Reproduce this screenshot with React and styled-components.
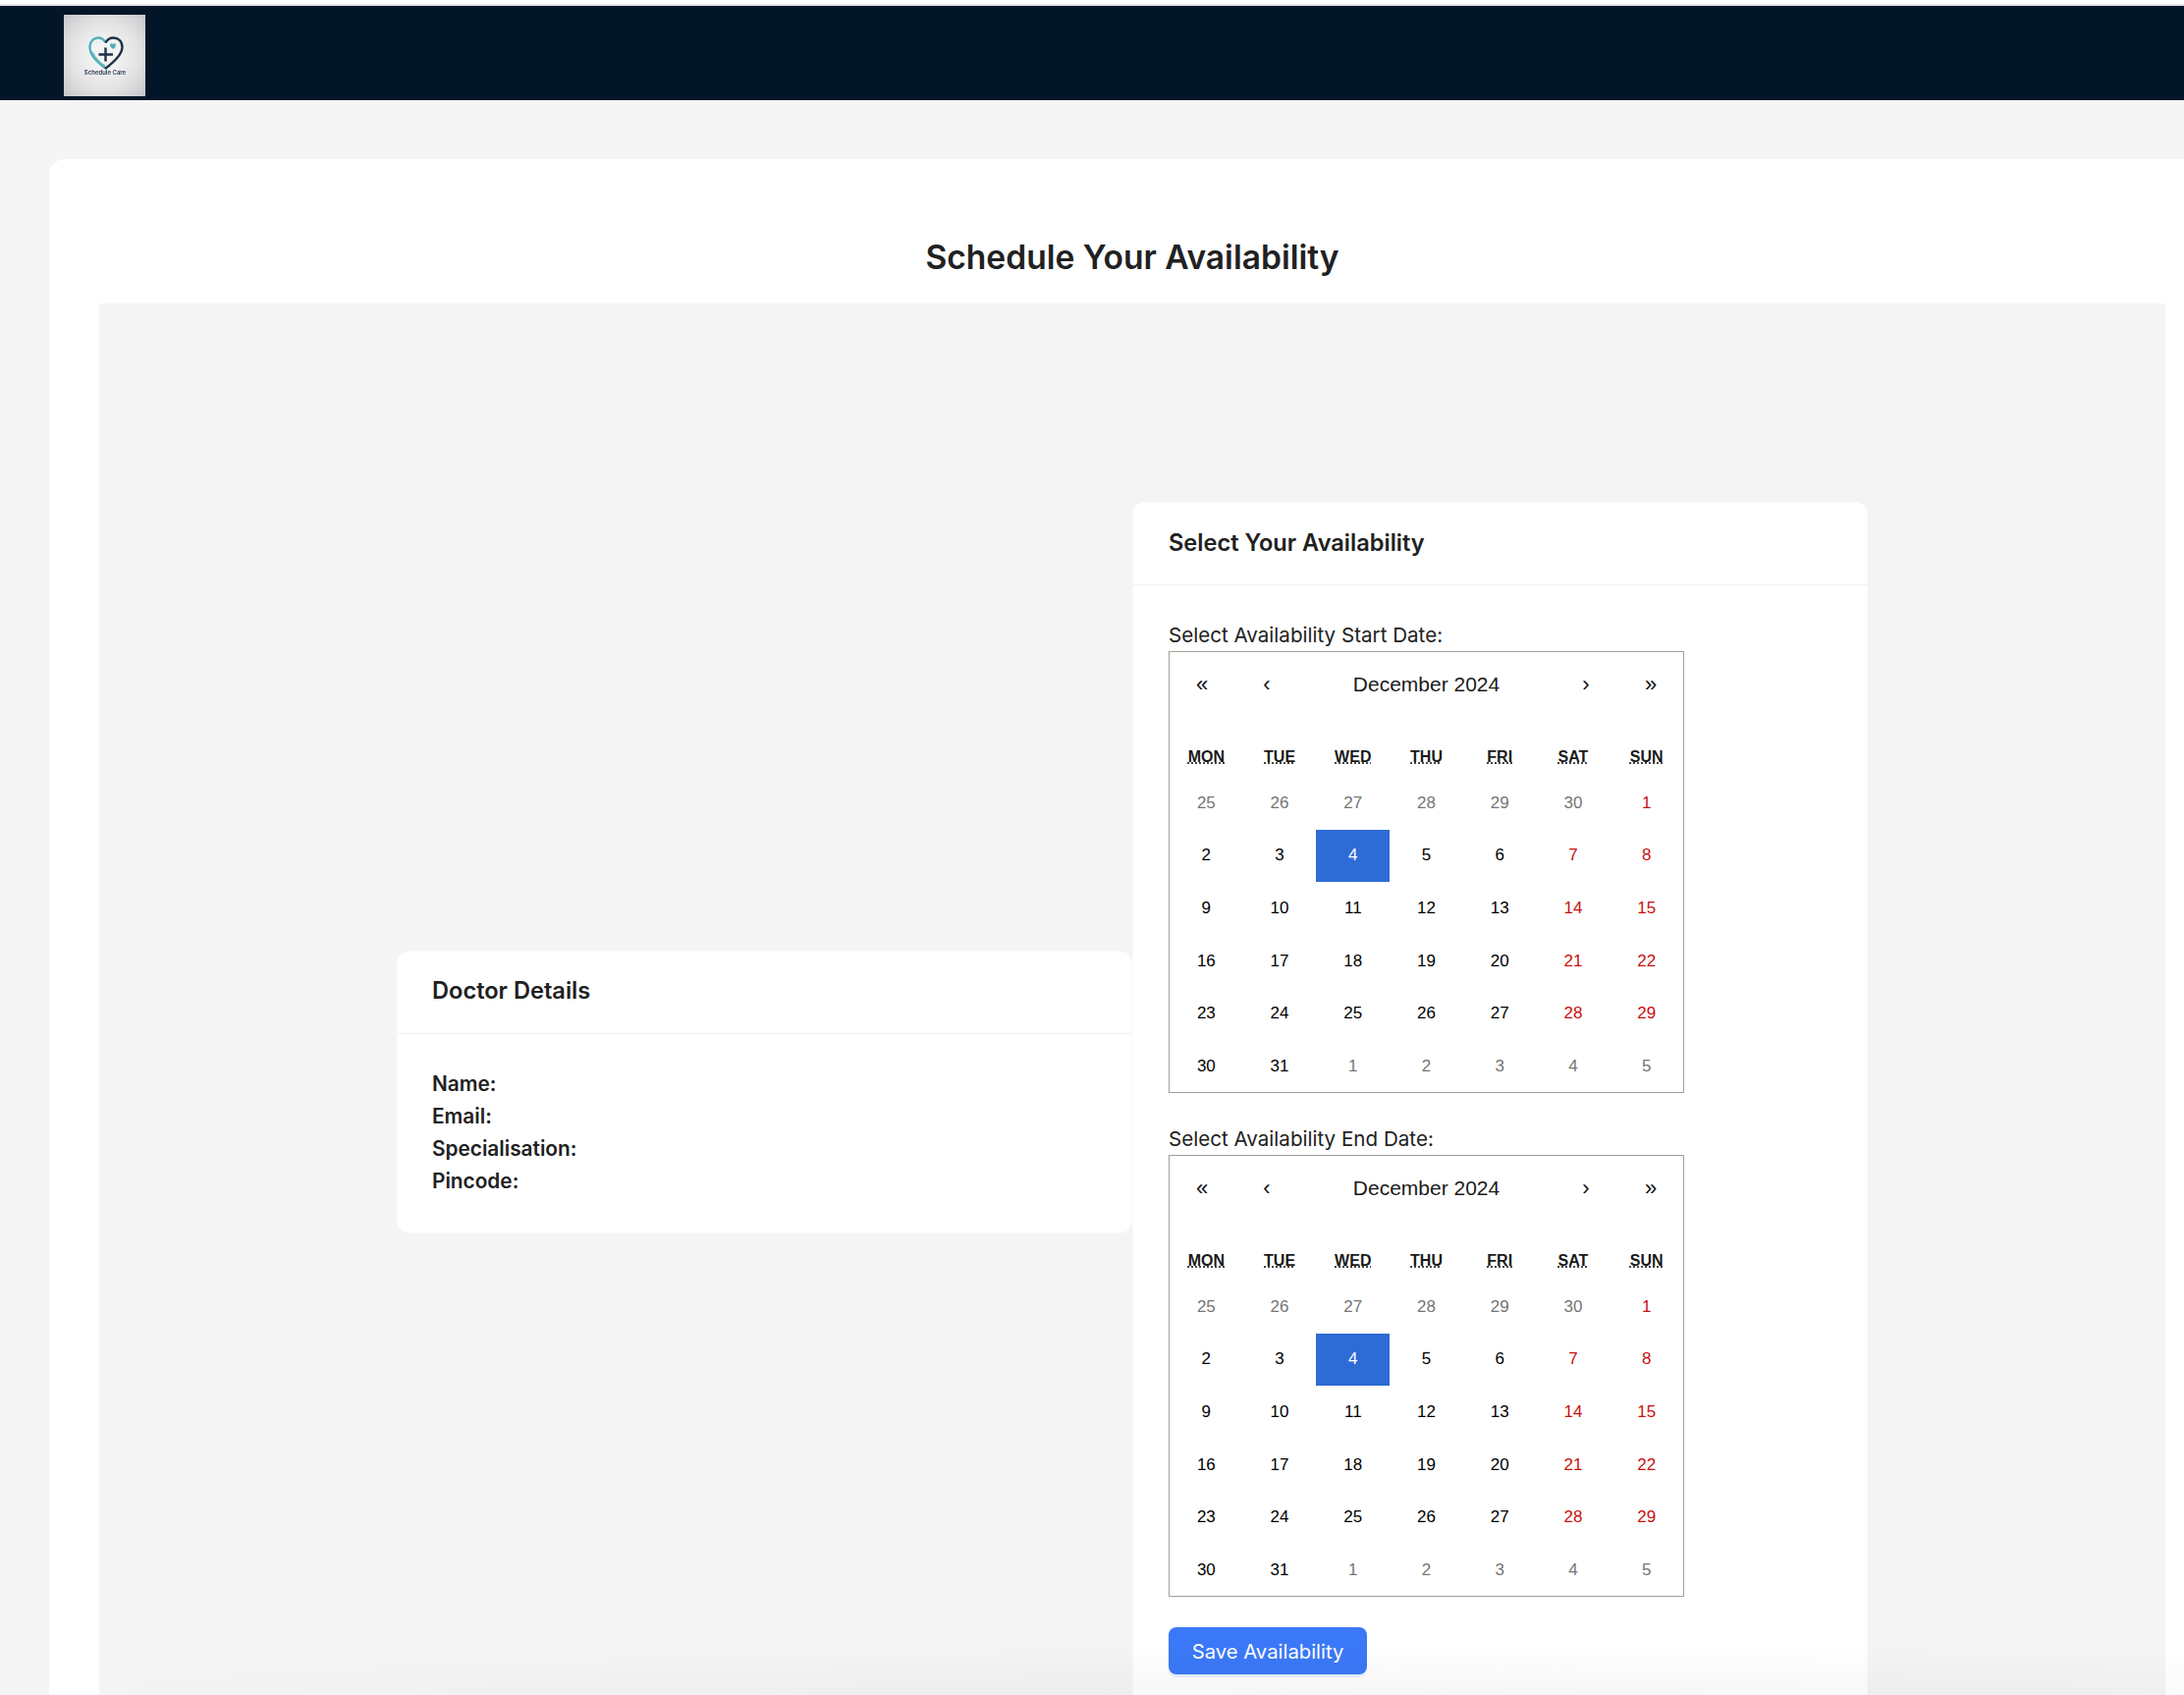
import React from "react";
import styled, { createGlobalStyle } from "styled-components";

const Global = createGlobalStyle`
  html, body { margin: 0; padding: 0; background: #f5f5f5; }
  body { font-family: Inter, "Liberation Sans", sans-serif; color: #212529; }
  * { box-sizing: border-box; }
`;

const weekdays = ["MON", "TUE", "WED", "THU", "FRI", "SAT", "SUN"];

// december 2024 as react-calendar lays it out, with the spill-over days
const days = [
  ...[25, 26, 27, 28, 29, 30].map((n) => ({ n, muted: true })),
  ...Array.from({ length: 31 }, (_, i) => ({ n: i + 1 })),
  ...[1, 2, 3, 4, 5].map((n) => ({ n, muted: true })),
];

const Calendar = () => (
  <CalendarBox>
    <CalendarNav>
      <NavButton>«</NavButton>
      <NavButton>‹</NavButton>
      <MonthLabel>December 2024</MonthLabel>
      <NavButton>›</NavButton>
      <NavButton>»</NavButton>
    </CalendarNav>
    <WeekRow>
      {weekdays.map((d) => (
        <WeekDay key={d}>{d}</WeekDay>
      ))}
    </WeekRow>
    <DayGrid>
      {days.map((d, i) => (
        <Tile key={i} $muted={d.muted} $weekend={i % 7 > 4 && !d.muted} $active={i === 9}>
          {d.n}
        </Tile>
      ))}
    </DayGrid>
  </CalendarBox>
);

const Logo = () => (
  <LogoBox>
    <svg width="83" height="83" viewBox="0 0 83 83">
      <path d="M42.5 54.5C34 48 26 41 26.5 32C27 26.5 31 23.5 35 23.5C38.5 23.5 41 25.5 42.5 28.5" fill="none" stroke="#4fb0b8" strokeWidth="2.4" />
      <path d="M42.5 28.5C44 25.5 47 23.5 50.5 23.5C55.5 23.5 59.5 27 59.5 33C59.5 41 50 49 42 55" fill="none" stroke="#1f3048" strokeWidth="2.4" />
      <path d="M29.5 38C32 44 37 49 42 52" fill="none" stroke="#4fb0b8" strokeWidth="1" />
      <path d="M42.5 33.5V47.5M35.5 40.5H50" fill="none" stroke="#1f3048" strokeWidth="2.4" />
      <path d="M50.5 35C48 33.5 46.5 32 47 30.5C47.5 29 49.5 29 50 30C50.8 28.8 53 29 53 30.8C53 32.4 52 33.8 50.5 35Z" fill="#4fb0b8" />
      <text x="42" y="60.5" textAnchor="middle" fontFamily="Inter, sans-serif" fontWeight="600" fontSize="6" fill="#2a3a50">Schedule Care</text>
    </svg>
  </LogoBox>
);

export default function App() {
  return (
    <Page>
      <Global />
      <TopStrip />
      <NavBar>
        <Logo />
      </NavBar>
      <MainCard>
        <PageTitle>Schedule Your Availability</PageTitle>
        <GreyArea>
          <DoctorCard>
            <CardHeader>Doctor Details</CardHeader>
            <DoctorBody>
              <Field>Name:</Field>
              <Field>Email:</Field>
              <Field>Specialisation:</Field>
              <Field>Pincode:</Field>
            </DoctorBody>
          </DoctorCard>
          <AvailabilityCard>
            <CardHeader $inset={36}>Select Your Availability</CardHeader>
            <AvailabilityBody>
              <DateBlock>
                <DateLabel>Select Availability Start Date:</DateLabel>
                <Calendar />
              </DateBlock>
              <DateBlock>
                <DateLabel>Select Availability End Date:</DateLabel>
                <Calendar />
              </DateBlock>
              <SaveButton>Save Availability</SaveButton>
            </AvailabilityBody>
          </AvailabilityCard>
        </GreyArea>
      </MainCard>
      <BottomFade />
    </Page>
  );
}

const Page = styled.div`
  position: relative;
  width: 2224px;
  height: 1726px;
  overflow: hidden;
  background: #f5f5f5;
`;

const TopStrip = styled.div`
  height: 6px;
  background: #fff;
  border-bottom: 2px solid #e6e6e6;
`;

const NavBar = styled.div`
  height: 96px;
  background: #031628;
  padding: 9px 0 0 65px;
`;

const LogoBox = styled.div`
  width: 83px;
  height: 83px;
  background: radial-gradient(circle at 50% 50%, #f4f4f4 20%, #e2e2e3 60%, #c6c7ca 100%);
  svg {
    display: block;
    filter: blur(0.35px);
  }
`;

const MainCard = styled.div`
  width: 2206px;
  margin: 60px 0 0 50px;
  background: #fff;
  border-radius: 16px;
  padding: 0 51px;
`;

const PageTitle = styled.h1`
  margin: 0;
  height: 147px;
  padding-top: 78px;
  text-align: center;
  font-size: 33.6px;
  line-height: 44px;
  font-weight: 600;
  color: #212121;
`;

const GreyArea = styled.div`
  display: flex;
  justify-content: center;
  align-items: center;
  padding: 202px 0 100px;
  background: #f4f4f4;
`;

const Card = styled.div`
  width: 749px;
  background: #fff;
  border-radius: 12px;
  border: 1px solid #fafafa;
`;

const DoctorCard = styled(Card)`
  margin-bottom: 30px;
`;

const AvailabilityCard = styled(Card)``;

const CardHeader = styled.div`
  height: 84px;
  padding: 0 ${(p) => p.$inset || 35}px 3px;
  display: flex;
  align-items: center;
  border-bottom: 1px solid #f0f0f0;
  font-size: 23.6px;
  font-weight: 600;
  color: #212121;
`;

const DoctorBody = styled.div`
  padding: 34px 35px 36px;
`;

const Field = styled.div`
  height: 33px;
  line-height: 33px;
  font-size: 20.8px;
  font-weight: 600;
  color: #212121;
`;

const AvailabilityBody = styled.div`
  padding: 35px 36px 36px;
  display: flex;
  flex-direction: column;
  align-items: flex-start;
`;

const DateBlock = styled.div`
  margin-bottom: 31px;
`;

const DateLabel = styled.div`
  height: 32px;
  line-height: 32px;
  font-size: 20.6px;
  color: #212121;
`;

const CalendarBox = styled.div`
  width: 525px;
  height: 450px;
  border: 1px solid #a0a096;
  background: #fff;
  font-family: "Liberation Sans", Arial, sans-serif;
`;

const CalendarNav = styled.div`
  display: grid;
  grid-template-columns: 66px 66px 1fr 66px 66px;
  height: 66px;
  align-items: center;
  margin-bottom: 21px;
`;

const NavButton = styled.div`
  text-align: center;
  font-size: 22px;
  color: #111;
`;

const MonthLabel = styled.div`
  text-align: center;
  font-size: 21px;
  color: #1a1a1a;
`;

const WeekRow = styled.div`
  display: grid;
  grid-template-columns: repeat(7, 1fr);
  height: 40px;
  align-items: center;
`;

const WeekDay = styled.div`
  text-align: center;
  font-size: 16px;
  font-weight: 700;
  color: #1a1a1a;
  text-decoration: underline dotted;
`;

const DayGrid = styled.div`
  display: grid;
  grid-template-columns: repeat(7, 1fr);
  grid-auto-rows: 53.6px;
`;

const Tile = styled.div`
  display: flex;
  align-items: center;
  justify-content: center;
  font-size: 17px;
  color: ${(p) => (p.$active ? "#fff" : p.$weekend ? "#c90f0f" : p.$muted ? "#757575" : "#000")};
  background: ${(p) => (p.$active ? "#2e6bd6" : "transparent")};
`;

const SaveButton = styled.button`
  width: 202px;
  height: 48px;
  border: 0;
  border-radius: 8px;
  background: #3b78f7;
  color: #fff;
  font-family: Inter, sans-serif;
  font-size: 20.3px;
  box-shadow: 0 3px 0 #e6f0fb;
`;

const BottomFade = styled.div`
  position: absolute;
  left: 130px;
  right: 0;
  bottom: 0;
  height: 52px;
  pointer-events: none;
  background: radial-gradient(ellipse 1500px 52px at 65% 100%, rgba(0, 0, 0, 0.035), rgba(0, 0, 0, 0));
`;
